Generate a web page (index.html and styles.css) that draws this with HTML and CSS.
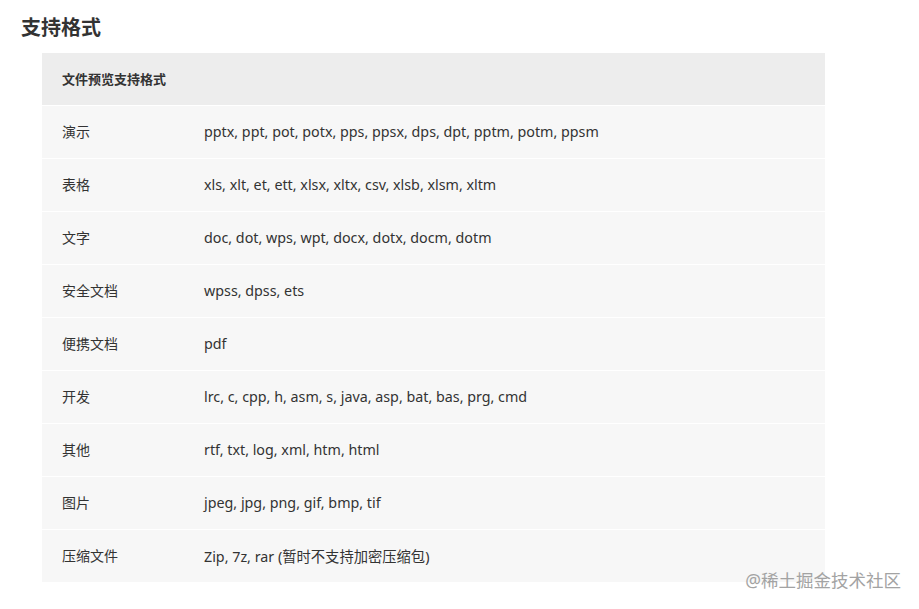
FILE: index.html
```html
<!DOCTYPE html>
<html lang="zh">
<head>
<meta charset="utf-8">
<link rel="stylesheet" href="styles.css">
</head>
<body>
<main class="page">
  <h2 class="title">支持格式</h2>
  <div class="table">
    <div class="row head"><div class="c1">文件预览支持格式</div><div class="c2"></div></div>
    <div class="row"><div class="c1">演示</div><div class="c2">pptx, ppt, pot, potx, pps, ppsx, dps, dpt, pptm, potm, ppsm</div></div>
    <div class="row"><div class="c1">表格</div><div class="c2">xls, xlt, et, ett, xlsx, xltx, csv, xlsb, xlsm, xltm</div></div>
    <div class="row"><div class="c1">文字</div><div class="c2">doc, dot, wps, wpt, docx, dotx, docm, dotm</div></div>
    <div class="row"><div class="c1">安全文档</div><div class="c2">wpss, dpss, ets</div></div>
    <div class="row"><div class="c1">便携文档</div><div class="c2">pdf</div></div>
    <div class="row"><div class="c1">开发</div><div class="c2">lrc, c, cpp, h, asm, s, java, asp, bat, bas, prg, cmd</div></div>
    <div class="row"><div class="c1">其他</div><div class="c2">rtf, txt, log, xml, htm, html</div></div>
    <div class="row"><div class="c1">图片</div><div class="c2">jpeg, jpg, png, gif, bmp, tif</div></div>
    <div class="row last"><div class="c1">压缩文件</div><div class="c2">Zip, 7z, rar (暂时不支持加密压缩包)</div></div>
  </div>
  <div class="mark">@稀土掘金技术社区</div>
</main>
</body>
</html>
```
FILE: styles.css
```css
* { box-sizing: border-box; }
html, body { margin: 0; padding: 0; background: #fff; }
body {
  font-family: "Noto Sans", "Noto Sans CJK SC", sans-serif;
  color: #333;
  width: 919px;
  height: 609px;
  overflow: hidden;
}
.page { position: relative; padding: 14px 0 0 21px; height: 609px; }
.title {
  margin: 0;
  font-size: 20px;
  font-weight: 700;
  line-height: 28px;
  color: #333;
}
.table {
  margin: 11px 0 0 21px;
  width: 783px;
}
.row {
  display: flex;
  height: 53px;
  padding-bottom: 2px;
  align-items: center;
  background: #f7f7f7;
  border-bottom: 1px solid #fff;
  font-size: 14px;
}
.row.last { border-bottom: none; height: 52px; }
.row.head {
  background: #ededed;
  font-size: 13px;
  font-weight: 700;
}
.c1 { width: 162px; padding-left: 20px; flex: none; }
.c2 { flex: 1; font-size: 14.3px; }
.mark {
  position: absolute;
  right: 18px;
  top: 567px;
  font-size: 17.5px;
  color: #a3a3a3;
}
```
